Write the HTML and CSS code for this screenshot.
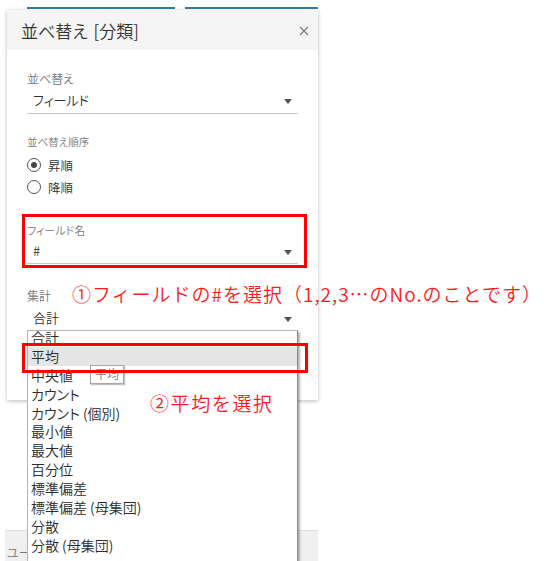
FILE: index.html
```html
<!DOCTYPE html>
<html lang="ja">
<head>
<meta charset="utf-8">
<title>並べ替え [分類]</title>
<link rel="stylesheet" href="styles.css">
</head>
<body>
<div class="page">
  <div class="topbars"><span class="bar bar-a"></span><span class="bar bar-b"></span></div>
  <div class="dialog">
    <div class="dlg-head">
      <span class="title">並べ替え [分類]</span>
      <svg class="close" width="10" height="10" viewBox="0 0 10 10"><path d="M1 1L9 9M9 1L1 9" stroke="#777" stroke-width="1.1" fill="none"/></svg>
    </div>
    <div class="dlg-body">
      <div class="label lbl-sort">並べ替え</div>
      <div class="select"><span class="val">フィールド</span><span class="caret"></span></div>
      <div class="label lbl-order">並べ替え順序</div>
      <div class="radios">
        <div class="radio"><span class="circle on"></span><span>昇順</span></div>
        <div class="radio"><span class="circle"></span><span>降順</span></div>
      </div>
      <div class="label lbl-field">フィールド名</div>
      <div class="select select-field"><span class="val">#</span><span class="caret"></span></div>
      <div class="label lbl-agg">集計</div>
      <div class="select select-agg"><span class="val">合計</span><span class="caret"></span></div>
    </div>
  </div>
  <div class="bottombar"><span class="bb-text">ユーザー</span></div>

  <div class="list">
    <ul class="items">
      <li>合計</li>
      <li class="hover">平均</li>
      <li>中央値</li>
      <li>カウント</li>
      <li>カウント (個別)</li>
      <li>最小値</li>
      <li>最大値</li>
      <li>百分位</li>
      <li>標準偏差</li>
      <li>標準偏差 (母集団)</li>
      <li>分散</li>
      <li>分散 (母集団)</li>
    </ul>
  </div>
  <div class="tip">平均</div>
  <div class="mark mark-1"></div>
  <div class="mark mark-2"></div>
  <p class="note note-1">①フィールドの#を選択（1,2,3…のNo.のことです）</p>
  <p class="note note-2">②平均を選択</p>
</div>
</body>
</html>
```
FILE: styles.css
```css
html, body {
  margin: 0;
  padding: 0;
  background: #fff;
}
body {
  font-family: "Noto Sans CJK JP", "Noto Sans", sans-serif;
  font-feature-settings: "palt";
  font-weight: 350;
  color: #333;
}
.page {
  position: relative;
  width: 544px;
  height: 561px;
  overflow: hidden;
}
.topbars {
  display: flex;
  height: 2px;
  margin-top: 7px;
  padding-left: 27px;
  gap: 10px;
}
.bar {
  display: block;
  height: 2px;
  background: #2f7d9b;
}
.bar-a { width: 148px; }
.bar-b { width: 133px; }

.dialog {
  margin: 1px 0 0 7px;
  width: 311px;
  height: 390px;
  background: #fff;
  box-shadow: 0 1px 4px rgba(0,0,0,0.28);
}
.dlg-head {
  height: 40px;
  background: #f5f5f5;
  display: flex;
  align-items: center;
  justify-content: space-between;
  padding: 0 9px 0 14px;
}
.title {
  font-size: 17px;
  line-height: 20px;
  color: #333;
  margin-top: 2px;
  word-spacing: 2px;
}
.close {
  display: block;
  margin-top: 1px;
}
.dlg-body {
  padding: 21px 20px 0 20px;
}
.label {
  color: #777;
  line-height: 16px;
  height: 16px;
}
.lbl-sort { font-size: 12px; }
.lbl-order { font-size: 10.5px; margin-top: 20px; }
.lbl-field { font-size: 11px; margin-top: 24px; }
.lbl-agg { font-size: 12px; margin-top: 24px; }
.select {
  display: flex;
  align-items: center;
  justify-content: space-between;
  height: 26px;
  border-bottom: 1px solid #c8c8c8;
  padding: 0 6px 0 6px;
  font-size: 13px;
}
.select-field { height: 25px; }
.select-agg { height: 28px; }
.val { line-height: 16px; }
.caret {
  width: 0;
  height: 0;
  border-left: 4px solid transparent;
  border-right: 4px solid transparent;
  border-top: 5px solid #555;
  margin-top: 3px;
}
.radios {
  margin-top: 4px;
}
.radio {
  display: flex;
  align-items: center;
  gap: 7px;
  height: 22px;
  font-size: 12.5px;
}
.circle {
  box-sizing: border-box;
  width: 14px;
  height: 14px;
  border: 1.3px solid #555;
  border-radius: 50%;
  display: flex;
  align-items: center;
  justify-content: center;
}
.circle.on::after {
  content: "";
  width: 6px;
  height: 6px;
  border-radius: 50%;
  background: #444;
}

.bottombar {
  margin: 130px 0 0 5px;
  width: 313px;
  height: 31px;
  background: #f0f0f0;
  border-top: 1px solid #dedede;
  font-size: 12px;
  color: #777;
  padding: 14px 0 0 2px;
  box-sizing: border-box;
}
.bb-text {
  display: block;
  width: 20px;
  overflow: hidden;
  white-space: nowrap;
  line-height: 16px;
}

.list {
  position: absolute;
  left: 27px;
  top: 330px;
  width: 271px;
  height: 260px;
  box-sizing: border-box;
  border: 1px solid #b4b4b4;
  border-right: 1px solid #8a8a8a;
  background: #fff;
  overflow: hidden;
  box-shadow: 2px 2px 2px rgba(0,0,0,0.3);
}
.items {
  list-style: none;
  margin: -3px 0 0 0;
  padding: 0;
}
.items li {
  height: 18.9px;
  line-height: 18.9px;
  padding-left: 3px;
  font-size: 14px;
  color: #2b2b2b;
}
.items li.hover { background: #e5e5e5; }

.tip {
  position: absolute;
  left: 90px;
  top: 365px;
  width: 34px;
  height: 19px;
  box-sizing: border-box;
  border: 1px solid #a8a8a8;
  background: #fff;
  font-size: 12px;
  line-height: 15px;
  color: #777;
  text-align: center;
  box-shadow: 1px 1px 1px rgba(0,0,0,0.25);
}
.mark {
  position: absolute;
  box-sizing: border-box;
  border: 3px solid #ff0000;
}
.mark-1 { left: 22px; top: 214px; width: 285px; height: 54px; }
.mark-2 { left: 22px; top: 343px; width: 286px; height: 30px; }

.note {
  position: absolute;
  margin: 0;
  color: #ff1a1a;
  font-size: 19px;
  line-height: 24px;
  font-weight: 350;
  font-feature-settings: normal;
  white-space: nowrap;
}
.note-1 { left: 72px; top: 282px; letter-spacing: 1px; }
.note-2 { left: 150px; top: 391px; letter-spacing: 1.6px; }
```
